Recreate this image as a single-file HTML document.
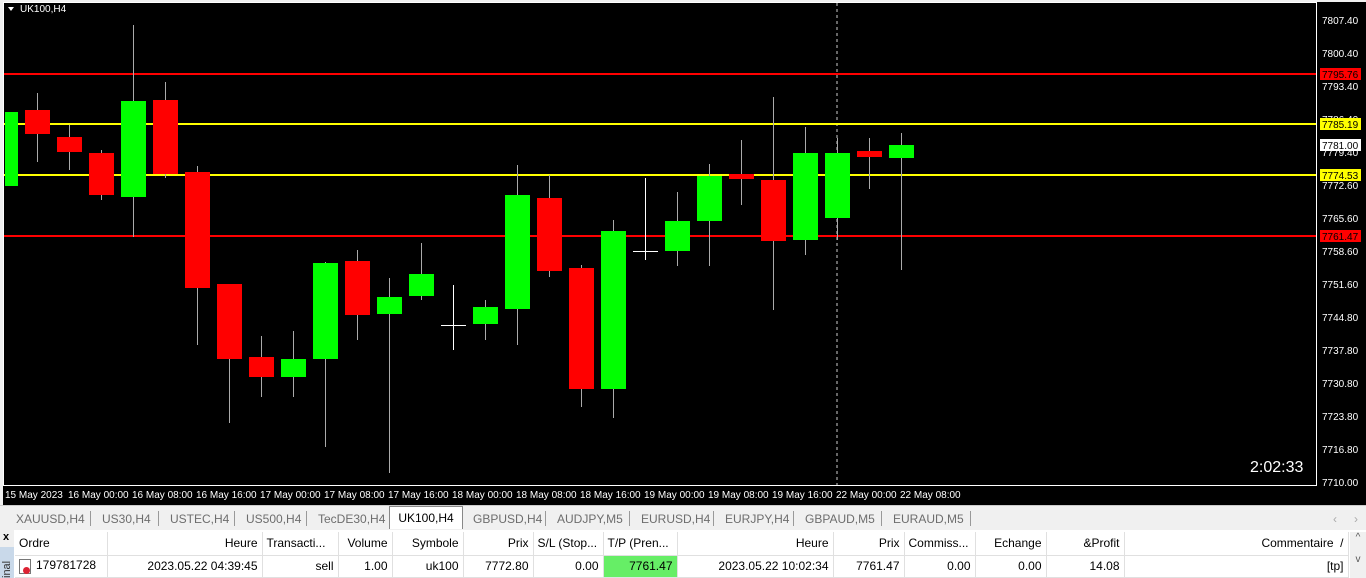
<!DOCTYPE html>
<html><head><meta charset="utf-8"><style>
body{margin:0;width:1366px;height:578px;overflow:hidden;background:#f0f0f0;font-family:"Liberation Sans",sans-serif;}
svg text{font-family:"Liberation Sans",sans-serif;}
.tabs{position:absolute;left:0;top:505px;width:1366px;height:24px;background:#f0f0f0;border-top:1px solid #ccc;font-size:12px;color:#6d6d6d;}
.tab{position:absolute;top:4px;height:18px;line-height:18px;}
.sep{position:absolute;top:5px;width:1px;height:15px;background:#999;}
.act{position:absolute;top:0;left:389px;width:72px;height:22px;background:#fff;border:1px solid #888;border-bottom:none;color:#000;text-align:center;line-height:22px;}
.term{position:absolute;left:0;top:530px;width:1366px;height:48px;background:#fff;}
table{position:absolute;left:15px;top:532px;border-collapse:collapse;font-size:12px;color:#000;table-layout:fixed;width:1333px;}
td{height:22px;padding:0 4px;border-right:1px solid #e0e0e0;border-bottom:1px solid #e0e0e0;white-space:nowrap;overflow:hidden;box-sizing:border-box;}
tr.h td{height:23px;}
.r{text-align:right}
</style></head><body>
<svg width="1366" height="506" style="position:absolute;left:0;top:0" xmlns="http://www.w3.org/2000/svg">
<rect width="1366" height="506" fill="#f0f0f0"/>
<rect x="3" y="2" width="1363" height="503" fill="#000"/>
<rect x="3.5" y="2.5" width="1313" height="483" fill="none" stroke="#fff" stroke-width="1"/>
<line x1="837" y1="3" x2="837" y2="485" stroke="#ccc" stroke-dasharray="3,3"/>
<g stroke-width="2">
<line x1="4" y1="74" x2="1316" y2="74" stroke="#f00"/>
<line x1="4" y1="124" x2="1316" y2="124" stroke="#ff0"/>
<line x1="4" y1="175" x2="1316" y2="175" stroke="#ff0"/>
<line x1="4" y1="236" x2="1316" y2="236" stroke="#f00"/>
</g>
<g id="c"></g>
<g fill="#fff" font-size="10">
<path d="M8 7 L14 7 L11 11 Z" fill="#fff"/>
<text x="20" y="12">UK100,H4</text>
</g>
<g fill="#fff" font-size="10">
<text x="1322" y="24">7807.40</text><text x="1322" y="57">7800.40</text><text x="1322" y="90">7793.40</text>
<text x="1322" y="123">7786.40</text><text x="1322" y="156">7779.40</text><text x="1322" y="189">7772.60</text>
<text x="1322" y="222">7765.60</text><text x="1322" y="255">7758.60</text><text x="1322" y="288">7751.60</text>
<text x="1322" y="321">7744.80</text><text x="1322" y="354">7737.80</text><text x="1322" y="387">7730.80</text>
<text x="1322" y="420">7723.80</text><text x="1322" y="453">7716.80</text><text x="1322" y="486">7710.00</text>
</g>
<rect x="1320" y="68" width="41" height="12" fill="#f00"/><text x="1322" y="78" font-size="10" fill="#000">7795.76</text>
<rect x="1320" y="118" width="41" height="12" fill="#ff0"/><text x="1322" y="128" font-size="10" fill="#000">7785.19</text>
<rect x="1320" y="139" width="41" height="12" fill="#fff"/><text x="1322" y="149" font-size="10" fill="#000">7781.00</text>
<rect x="1320" y="169" width="41" height="12" fill="#ff0"/><text x="1322" y="179" font-size="10" fill="#000">7774.53</text>
<rect x="1320" y="230" width="41" height="12" fill="#f00"/><text x="1322" y="240" font-size="10" fill="#000">7761.47</text>
<text x="1250" y="472" font-size="16" fill="#fff">2:02:33</text>
<g fill="#fff" font-size="10">
<text x="5" y="498">15 May 2023</text><text x="68" y="498">16 May 00:00</text><text x="132" y="498">16 May 08:00</text>
<text x="196" y="498">16 May 16:00</text><text x="260" y="498">17 May 00:00</text><text x="324" y="498">17 May 08:00</text>
<text x="388" y="498">17 May 16:00</text><text x="452" y="498">18 May 00:00</text><text x="516" y="498">18 May 08:00</text>
<text x="580" y="498">18 May 16:00</text><text x="644" y="498">19 May 00:00</text><text x="708" y="498">19 May 08:00</text>
<text x="772" y="498">19 May 16:00</text><text x="836" y="498">22 May 00:00</text><text x="900" y="498">22 May 08:00</text>
</g>
</svg>
<script>
var d=[[37,'r',110,134,93,162],[69,'r',137,152,125,170],[101,'r',153,195,150,200],[133,'g',101,197,25,237],[165,'r',100,174,82,178],[197,'r',172,288,166,345],[229,'r',284,359,284,423],[261,'r',357,377,336,397],[293,'g',359,377,331,397],[325,'g',263,359,262,447],[357,'r',261,315,250,340],[389,'g',297,314,278,473],[421,'g',274,296,243,300],[453,'w',325,325,285,350],[485,'g',307,324,300,340],[517,'g',195,309,165,345],[549,'r',198,271,175,277],[581,'r',268,389,265,407],[613,'g',231,389,220,418],[645,'w',251,251,178,260],[677,'g',221,251,192,266],[709,'g',176,221,164,266],[741,'r',174,179,140,205],[773,'r',180,241,97,310],[805,'g',153,240,127,255],[837,'g',153,218,138,240],[869,'r',151,157,138,189],[901,'g',145,158,133,270]];
var s='<rect x="5" y="112" width="13" height="74" fill="#00ff00"/>';d.forEach(function(c){var col=c[1]=='g'?'#00ff00':c[1]=='r'?'#ff0000':'#fff';
s+='<line x1="'+c[0]+'.5" y1="'+c[4]+'" x2="'+c[0]+'.5" y2="'+c[5]+'" stroke="'+(c[1]=='w'?'#fff':'#aaa')+'"/>';
if(c[1]=='w')s+='<line x1="'+(c[0]-12)+'" y1="'+c[2]+'.5" x2="'+(c[0]+13)+'" y2="'+c[2]+'.5" stroke="#fff"/>';
else s+='<rect x="'+(c[0]-12)+'" y="'+c[2]+'" width="25" height="'+Math.max(5,c[3]-c[2])+'" fill="'+col+'"/>';});
document.getElementById('c').innerHTML=s;
</script>
<div class="tabs">
<span class="tab" style="left:16px">XAUUSD,H4</span><span class="sep" style="left:90px"></span>
<span class="tab" style="left:102px">US30,H4</span><span class="sep" style="left:158px"></span>
<span class="tab" style="left:170px">USTEC,H4</span><span class="sep" style="left:234px"></span>
<span class="tab" style="left:246px">US500,H4</span><span class="sep" style="left:306px"></span>
<span class="tab" style="left:318px">TecDE30,H4</span>
<div class="act">UK100,H4</div>
<span class="tab" style="left:473px">GBPUSD,H4</span><span class="sep" style="left:545px"></span>
<span class="tab" style="left:557px">AUDJPY,M5</span><span class="sep" style="left:629px"></span>
<span class="tab" style="left:641px">EURUSD,H4</span><span class="sep" style="left:713px"></span>
<span class="tab" style="left:725px">EURJPY,H4</span><span class="sep" style="left:793px"></span>
<span class="tab" style="left:805px">GBPAUD,M5</span><span class="sep" style="left:881px"></span>
<span class="tab" style="left:893px">EURAUD,M5</span><span class="sep" style="left:970px"></span>
<span class="tab" style="left:1333px;color:#aaa">‹</span><span class="tab" style="left:1354px;color:#aaa">›</span>
</div>
<div class="term"></div>
<div style="position:absolute;left:0;top:530px;width:14px;height:48px;background:#f0f0f0"></div>
<div style="position:absolute;left:3px;top:531px;font-size:11px;font-weight:bold">x</div>
<div style="position:absolute;left:0;top:547px;width:14px;height:31px;background:#c9d9ea;font-size:11px;color:#333;writing-mode:vertical-rl;transform:rotate(180deg);line-height:14px">inal</div>
<table>
<colgroup><col style="width:92px"><col style="width:155px"><col style="width:76px"><col style="width:54px"><col style="width:71px"><col style="width:70px"><col style="width:70px"><col style="width:74px"><col style="width:156px"><col style="width:71px"><col style="width:71px"><col style="width:71px"><col style="width:78px"><col style="width:224px"></colgroup>
<tr class="h"><td>Ordre</td><td class="r">Heure</td><td>Transacti...</td><td class="r">Volume</td><td class="r">Symbole</td><td class="r">Prix</td><td>S/L (Stop...</td><td>T/P (Pren...</td><td class="r">Heure</td><td class="r">Prix</td><td>Commiss...</td><td class="r">Echange</td><td class="r">&amp;Profit</td><td class="r">Commentaire &nbsp;/</td></tr>
<tr><td><span style="display:inline-block;width:10px;height:13px;border:1px solid #777;vertical-align:middle;position:relative;margin-right:5px"><span style="position:absolute;left:3px;top:7px;width:7px;height:7px;border-radius:50%;background:#d23"></span></span>179781728</td><td class="r">2023.05.22 04:39:45</td><td class="r">sell</td><td class="r">1.00</td><td class="r">uk100</td><td class="r">7772.80</td><td class="r">0.00</td><td class="r" style="background:#66ee66">7761.47</td><td class="r">2023.05.22 10:02:34</td><td class="r">7761.47</td><td class="r">0.00</td><td class="r">0.00</td><td class="r">14.08</td><td class="r">[tp]</td></tr>
</table>
<div style="position:absolute;left:1350px;top:532px;width:16px;height:46px;background:#f0f0f0;font-size:10px;color:#555;text-align:center">^<br><br>v</div>
</body></html>
